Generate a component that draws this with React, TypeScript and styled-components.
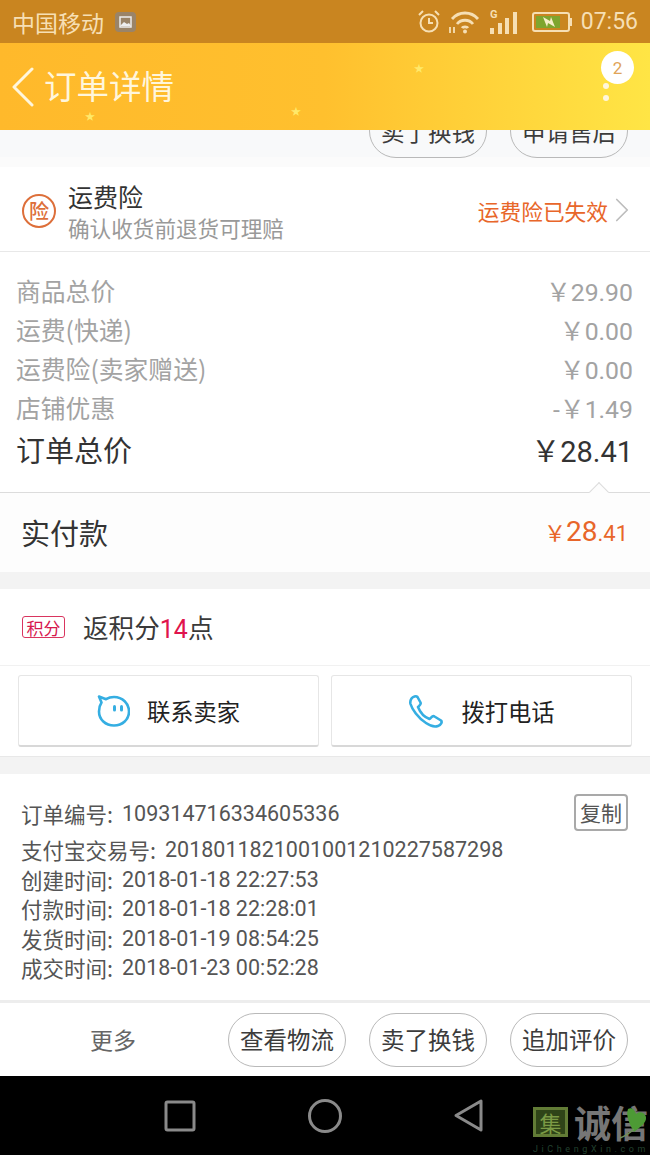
import React from "react";
import styled, { createGlobalStyle } from "styled-components";
import { ChevronRight } from "lucide-react";

const GlobalStyle = createGlobalStyle`
  html, body {
    margin: 0;
    padding: 0;
    background: #fff;
  }
  * {
    box-sizing: border-box;
  }
`;

const CN = `"Noto Sans CJK SC", "Liberation Sans", sans-serif`;
const LATIN = `Roboto, "Noto Sans CJK SC", sans-serif`;

const Page = styled.div`
  width: 650px;
  height: 1155px;
  display: flex;
  flex-direction: column;
  overflow: hidden;
  font-family: ${CN};
  background: #fff;
`;

const StatusBar = styled.div`
  height: 43px;
  background: #c98520;
  color: #f6dfb4;
  display: flex;
  align-items: center;
  justify-content: space-between;
  padding: 0 12px;
`;

const StatusGroup = styled.div`
  display: flex;
  align-items: center;
`;

const Carrier = styled.span`
  font-size: 23px;
  line-height: 24px;
  margin-right: 11px;
`;

const Clock = styled.span`
  font-family: ${LATIN};
  font-size: 23px;
  margin-left: 9px;
`;

const Header = styled.div`
  position: relative;
  height: 87px;
  background: linear-gradient(90deg, #ffb92b 0%, #ffc02e 50%, #ffe545 100%);
  display: flex;
  align-items: center;
  padding: 0 0 0 11px;
`;

const HeaderTitle = styled.span`
  font-size: 32.500px;
  line-height: 40px;
  color: #fff6dc;
  margin-left: 9px;
  padding-bottom: 3px;
`;

const Star = styled.span<{ $x: number; $y: number }>`
  position: absolute;
  left: ${(p) => p.$x}px;
  top: ${(p) => p.$y}px;
  font-size: 10px;
  line-height: 11px;
  color: #ffe96a;
`;

const Badge = styled.span`
  position: absolute;
  left: 601px;
  top: 8px;
  width: 33px;
  height: 33px;
  border-radius: 50%;
  background: #fff;
  color: #e0a458;
  font-family: ${LATIN};
  font-size: 17px;
  display: flex;
  align-items: center;
  justify-content: center;
`;

const MenuDot = styled.span<{ $y: number }>`
  position: absolute;
  left: 603px;
  top: ${(p) => p.$y}px;
  width: 6px;
  height: 6px;
  border-radius: 50%;
  background: #fff6dc;
`;

const PeekStrip = styled.div`
  height: 37px;
  flex: none;
  background: linear-gradient(#f8f9fa 0 27px, #fbfbfb 27px);
  display: flex;
  justify-content: flex-end;
  gap: 23px;
  padding-right: 22px;
  overflow: hidden;
`;

const PeekButtonSlot = styled.div`
  height: 28px;
  display: flex;
  align-items: flex-end;
`;

const PillButton = styled.div`
  width: 118px;
  height: 54px;
  flex: none;
  border: 1px solid #b9b9b9;
  border-radius: 27px;
  background: #fff;
  color: #3c3c3c;
  font-size: 23.500px;
  padding-bottom: 1px;
  display: flex;
  align-items: center;
  justify-content: center;
  white-space: nowrap;
`;

const PeekPill = styled(PillButton)`
  background: #f8f9fa;
`;

const InsuranceRow = styled.div`
  height: 85px;
  flex: none;
  display: flex;
  align-items: center;
  padding: 0 21px 0 22px;
  border-bottom: 1px solid #e8e8e8;
`;

const InsuranceSeal = styled.span`
  width: 34px;
  height: 34px;
  border: 2px solid #dd6f3a;
  border-radius: 50%;
  color: #dd6f3a;
  font-size: 20px;
  font-weight: 500;
  line-height: 1;
  display: flex;
  align-items: center;
  justify-content: center;
  margin: 4px 12px 0 0;
`;

const InsuranceText = styled.div`
  flex: 1;
  display: flex;
  flex-direction: column;
  padding-top: 5px;
`;

const InsuranceTitle = styled.span`
  font-size: 25px;
  line-height: 32px;
  color: #333;
`;

const InsuranceSub = styled.span`
  font-size: 21.600px;
  line-height: 31px;
  color: #999;
`;

const InsuranceState = styled.span`
  font-size: 21.700px;
  color: #e8662a;
  display: flex;
  align-items: center;
  padding-top: 3px;
`;

const StateChevron = styled(ChevronRight)`
  margin: -2px -14px 0 -7px;
`;

const PriceList = styled.div`
  height: 241px;
  flex: none;
  padding: 18px 17px 0 16px;
  border-bottom: 1px solid #dcdcdc;
  position: relative;
`;

const PriceRow = styled.div<{ $total?: boolean }>`
  height: 39px;
  display: flex;
  align-items: center;
  justify-content: space-between;
  font-size: ${(p) => (p.$total ? 29 : 24.800)}px;
  color: ${(p) => (p.$total ? "#333" : "#a3a3a3")};
  margin-top: ${(p) => (p.$total ? 3 : 0)}px;
`;

const PriceValue = styled.span`
  font-family: ${LATIN};
`;

const Notch = styled.span`
  position: absolute;
  right: 44px;
  bottom: -7px;
  width: 14px;
  height: 14px;
  background: #fdfdfd;
  border-top: 1px solid #dcdcdc;
  border-left: 1px solid #dcdcdc;
  transform: rotate(45deg);
`;

const PayRow = styled.div`
  height: 79px;
  flex: none;
  background: #fdfdfd;
  display: flex;
  align-items: center;
  justify-content: space-between;
  padding: 0 22px 2px 21px;
`;

const PayLabel = styled.span`
  font-size: 29px;
  color: #333;
`;

const PayAmount = styled.span`
  font-family: ${LATIN};
  color: #e8662a;
  display: flex;
  align-items: baseline;
  font-size: 28px;
`;

const PaySmall = styled.span<{ $size: number }>`
  font-size: ${(p) => p.$size}px;
`;

const Gap = styled.div`
  height: 17px;
  flex: none;
  background: #f3f3f3;
`;

const PointsRow = styled.div`
  height: 77px;
  flex: none;
  display: flex;
  align-items: center;
  padding-left: 22px;
  border-bottom: 1px solid #f1f1f1;
`;

const PointsTag = styled.span`
  width: 43px;
  height: 22px;
  border: 1px solid #d9355f;
  border-radius: 3px;
  color: #d6174e;
  font-size: 17px;
  display: flex;
  align-items: center;
  justify-content: center;
  margin-right: 18px;
`;

const PointsText = styled.span`
  font-size: 25.600px;
  padding-bottom: 1px;
  color: #3a3a3a;
`;

const PointsNumber = styled.span`
  font-family: ${LATIN};
  font-size: 25px;
  color: #e0144c;
`;

const ContactRow = styled.div`
  height: 91px;
  flex: none;
  display: flex;
  gap: 12px;
  padding: 9px 18px 0;
  border-bottom: 1px solid #e8e8e8;
`;

const ContactButton = styled.div`
  width: 301px;
  height: 72px;
  background: #fff;
  border: 1px solid #e6e6e6;
  border-bottom: 2px solid #d8d8d8;
  border-radius: 3px;
  display: flex;
  align-items: center;
  justify-content: center;
  gap: 17px;
  font-size: 23.300px;
  color: #222;
`;

const OrderInfo = styled.div`
  height: 226px;
  flex: none;
  padding: 25px 22px 0 21px;
  position: relative;
`;

const InfoLine = styled.div<{ $first?: boolean }>`
  height: 29.500px;
  display: flex;
  align-items: center;
  font-size: 21.500px;
  color: #555;
  white-space: nowrap;
  margin-bottom: ${(p) => (p.$first ? 6.500 : 0)}px;
`;

const InfoValue = styled.span`
  font-family: ${LATIN};
  margin-left: 9px;
`;

const CopyButton = styled.span`
  position: absolute;
  right: 22px;
  top: 20px;
  width: 54px;
  height: 37px;
  border: 2px solid #a9a9a9;
  border-radius: 4px;
  font-size: 21px;
  padding-bottom: 2px;
  color: #555;
  display: flex;
  align-items: center;
  justify-content: center;
`;

const Divider = styled.div`
  height: 3px;
  flex: none;
  background: #ededed;
`;

const Footer = styled.div`
  height: 73px;
  flex: none;
  display: flex;
  align-items: center;
  gap: 23px;
  padding: 0 22px 0 90px;
`;

const MoreLabel = styled.span`
  font-size: 23px;
  color: #666;
  margin-right: auto;
  padding-bottom: 1px;
`;

const NavBar = styled.div`
  flex: 1;
  background: #000;
  position: relative;
  display: flex;
  align-items: center;
  padding: 0 0 0 162px;
  gap: 109px;
`;

const Watermark = styled.div`
  position: absolute;
  left: 533px;
  top: 30px;
  display: flex;
  align-items: center;
  gap: 6px;
`;

const WatermarkSeal = styled.span`
  width: 35px;
  height: 30px;
  background: #2f4418;
  border: 3px solid #627c36;
  color: #7b9a45;
  font-size: 22px;
  line-height: 1;
  display: flex;
  align-items: center;
  justify-content: center;
  flex: none;
`;

const WatermarkText = styled.span`
  font-size: 37px;
  line-height: 32px;
  font-weight: 700;
  color: #767676;
  white-space: nowrap;
`;

const WatermarkUrl = styled.span`
  position: absolute;
  left: 0;
  top: 38px;
  font-family: ${LATIN};
  font-size: 9px;
  line-height: 10px;
  letter-spacing: 3.600px;
  color: #22402f;
  white-space: nowrap;
`;

const WatermarkLeaf = styled.svg`
  position: absolute;
  left: 86px;
  top: 0;
`;

const prices = [
  { label: "商品总价", value: "￥29.90" },
  { label: "运费(快递)", value: "￥0.00" },
  { label: "运费险(卖家赠送)", value: "￥0.00" },
  { label: "店铺优惠", value: "-￥1.49" },
];

const times = [
  { label: "支付宝交易号:", value: "2018011821001001210227587298" },
  { label: "创建时间:", value: "2018-01-18 22:27:53" },
  { label: "付款时间:", value: "2018-01-18 22:28:01" },
  { label: "发货时间:", value: "2018-01-19 08:54:25" },
  { label: "成交时间:", value: "2018-01-23 00:52:28" },
];

const App: React.FC = () => {
  return (
    <Page>
      <GlobalStyle />
      <StatusBar>
        <StatusGroup>
          <Carrier>中国移动</Carrier>
          <svg width="21" height="20" viewBox="0 0 21 20">
            <rect width="21" height="20" rx="4" fill="#9a8468" />
            <rect x="5" y="5" width="11" height="10" fill="none" stroke="#eee" strokeWidth="1.500" />
            <path d="M5 14l4-4 3 2 2-1 2 3z" fill="#eee" />
          </svg>
        </StatusGroup>
        <StatusGroup>
          <svg width="22" height="23" viewBox="0 0 22 23" fill="none" stroke="#f6dfb4" strokeWidth="2" style={{ marginRight: 8 }}>
            <circle cx="11" cy="13" r="8.500" />
            <path d="M11 8v5h4M1 5l4-4M21 5l-4-4" />
          </svg>
          <svg width="32" height="24" viewBox="0 0 32 24" fill="none" stroke="#f6dfb4" strokeWidth="2.800" style={{ marginRight: 10 }}>
            <path d="M4 9c7-8 19-8 26 0M9 14c4-5 12-5 16 0M14 18c1-1.500 5-1.500 6 0" />
            <circle cx="17" cy="21.500" r="2" fill="#f6dfb4" stroke="none" />
            <path d="M2 17v6M6 17v6" strokeWidth="1.800" />
          </svg>
          <svg width="27" height="27" viewBox="0 0 27 27" fill="#f6dfb4" style={{ marginRight: 15 }}>
            <rect x="0" y="20" width="4" height="6" />
            <rect x="8" y="15" width="4" height="11" />
            <rect x="15" y="10" width="4" height="16" />
            <rect x="23" y="4" width="4" height="22" />
            <text x="0" y="10" fontSize="11" fontFamily="Roboto, sans-serif" fontWeight="700">G</text>
          </svg>
          <svg width="40" height="20" viewBox="0 0 40 20">
            <rect x="1" y="1" width="36" height="18" rx="2" fill="none" stroke="#f6dfb4" strokeWidth="2" />
            <rect x="4" y="4" width="24" height="12" fill="#7ea52e" />
            <rect x="38" y="6" width="2" height="8" fill="#f6dfb4" />
            <path d="M11 5l7 4 1-4 4 10-7-4-1 4z" fill="#f6efc8" />
          </svg>
          <Clock>07:56</Clock>
        </StatusGroup>
      </StatusBar>

      <Header>
        <svg width="24" height="40" viewBox="0 0 24 40" fill="none" stroke="#fff6dc" strokeWidth="3" strokeLinecap="round" strokeLinejoin="round">
          <path d="M21 2L3 20l18 18" />
        </svg>
        <HeaderTitle>订单详情</HeaderTitle>
        <Star $x={85} $y={67}>★</Star>
        <Star $x={291} $y={62}>★</Star>
        <Star $x={414} $y={19}>★</Star>
        <Badge>2</Badge>
        <MenuDot $y={40} />
        <MenuDot $y={52} />
      </Header>

      <PeekStrip>
        <PeekButtonSlot><PeekPill>卖了换钱</PeekPill></PeekButtonSlot>
        <PeekButtonSlot><PeekPill>申请售后</PeekPill></PeekButtonSlot>
      </PeekStrip>

      <InsuranceRow>
        <InsuranceSeal>险</InsuranceSeal>
        <InsuranceText>
          <InsuranceTitle>运费险</InsuranceTitle>
          <InsuranceSub>确认收货前退货可理赔</InsuranceSub>
        </InsuranceText>
        <InsuranceState>
          运费险已失效
          <StateChevron size={42} color="#bdbdbd" strokeWidth={1} />
        </InsuranceState>
      </InsuranceRow>

      <PriceList>
        {prices.map((item) => (
          <PriceRow key={item.label}>
            <span>{item.label}</span>
            <PriceValue>{item.value}</PriceValue>
          </PriceRow>
        ))}
        <PriceRow $total>
          <span>订单总价</span>
          <PriceValue>￥28.41</PriceValue>
        </PriceRow>
        <Notch />
      </PriceList>

      <PayRow>
        <PayLabel>实付款</PayLabel>
        <PayAmount>
          <PaySmall $size={22}>￥</PaySmall>28<PaySmall $size={22}>.41</PaySmall>
        </PayAmount>
      </PayRow>

      <Gap />

      <PointsRow>
        <PointsTag>积分</PointsTag>
        <PointsText>返积分<PointsNumber>14</PointsNumber>点</PointsText>
      </PointsRow>

      <ContactRow>
        <ContactButton>
          <svg width="33" height="33" viewBox="0 0 33 33" fill="none" stroke="#35aee2" strokeWidth="2.600" strokeLinejoin="round" strokeLinecap="round">
            <path d="M4.500 8.500C2.800 11 2 14 2 17.500 2 25.500 8.500 31.500 17 31.500s15-6 15-14S25.500 3 17 3c-3 0-5.700 .8-8 2.200L2 2.500z" />
            <rect x="16" y="11" width="3" height="6.500" rx="1.500" fill="#35aee2" stroke="none" />
            <rect x="23" y="11" width="3" height="6.500" rx="1.500" fill="#35aee2" stroke="none" />
          </svg>
          联系卖家
        </ContactButton>
        <ContactButton>
          <svg width="36" height="34" viewBox="0 0 36 34" fill="none" stroke="#35aee2" strokeWidth="2.600" strokeLinejoin="round">
            <path d="M3.500 4.500C5 2.500 8 1.500 9.500 3l3 5.500c1 2-1 3-2.500 4.500 2 5 6 10 11.500 12 2-1.500 3-4 5-2.500l6.500 4c1.500 1.500 0 4.500-3 5.500s-7 .5-12-3C10 24 4 15 2.500 10 2 8 2.500 6 3.500 4.500z" />
          </svg>
          拨打电话
        </ContactButton>
      </ContactRow>

      <Gap />

      <OrderInfo>
        <InfoLine $first>
          订单编号:<InfoValue>109314716334605336</InfoValue>
        </InfoLine>
        {times.map((item) => (
          <InfoLine key={item.label}>
            {item.label}<InfoValue>{item.value}</InfoValue>
          </InfoLine>
        ))}
        <CopyButton>复制</CopyButton>
      </OrderInfo>

      <Divider />

      <Footer>
        <MoreLabel>更多</MoreLabel>
        <PillButton>查看物流</PillButton>
        <PillButton>卖了换钱</PillButton>
        <PillButton>追加评价</PillButton>
      </Footer>

      <NavBar>
        <svg width="36" height="36" viewBox="0 0 36 36" fill="none" stroke="#8a8a8a" strokeWidth="3">
          <rect x="4" y="4" width="28" height="28" rx="1.500" />
        </svg>
        <svg width="36" height="36" viewBox="0 0 36 36" fill="none" stroke="#8a8a8a" strokeWidth="3">
          <circle cx="18" cy="18" r="15.500" />
        </svg>
        <svg width="36" height="36" viewBox="0 0 36 36" fill="none" stroke="#8a8a8a" strokeWidth="3" strokeLinejoin="round">
          <path d="M29 3v29L4 17.500z" />
        </svg>
        <Watermark>
          <WatermarkSeal>集</WatermarkSeal>
          <WatermarkText>诚信</WatermarkText>
          <WatermarkUrl>JiChengXin.com</WatermarkUrl>
          <WatermarkLeaf width="34" height="34" viewBox="0 0 34 34">
            <path d="M9 3c4-2 7 1 8 5 3-3 9-2 10 3 1 6-7 11-12 15-3-5-9-16-6-23z" fill="#4d9a35" />
            <path d="M1 32c5-2 10-5 14-9" stroke="#6f8f5a" strokeWidth="1.500" fill="none" />
          </WatermarkLeaf>
        </Watermark>
      </NavBar>
    </Page>
  );
};

export default App;
